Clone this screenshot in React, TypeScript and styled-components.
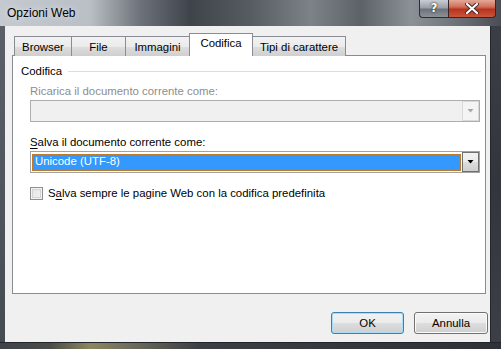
import React from "react";
import styled, { createGlobalStyle } from "styled-components";

const GlobalStyle = createGlobalStyle`
  html, body {
    margin: 0;
    padding: 0;
  }
  body {
    width: 501px;
    height: 349px;
    overflow: hidden;
    font-family: "Liberation Sans", Arial, sans-serif;
    font-size: 11.4px;
    color: #000;
  }
`;

const tabs = [
  { id: "browser", title: "Browser", width: 58 },
  { id: "file", title: "File", width: 55 },
  { id: "img", title: "Immagini", width: 65 },
  { id: "cod", title: "Codifica", width: 64 },
  { id: "font", title: "Tipi di carattere", width: 94 },
];

function Arrow({ color }: { color: string }) {
  return (
    <svg width="7" height="4" viewBox="0 0 7 4">
      <polygon points="0.5,0 6.5,0 3.5,3.5" fill={color} />
    </svg>
  );
}

function App() {
  return (
    <Window>
      <GlobalStyle />
      <TitleBar>
        <Title>Opzioni Web</Title>
        <CaptionButtons>
          <HelpButton>?</HelpButton>
          <CloseButton>
            <svg width="14" height="11" viewBox="0 0 14 11">
              <path
                d="M2 1 L12 10 M12 1 L2 10"
                stroke="#3a2a28"
                strokeWidth="4"
                strokeLinecap="round"
              />
              <path
                d="M2 1 L12 10 M12 1 L2 10"
                stroke="#ffffff"
                strokeWidth="2.2"
                strokeLinecap="round"
              />
            </svg>
          </CloseButton>
        </CaptionButtons>
      </TitleBar>
      <Middle>
        <SideFrame />
        <Client>
          <TabRow>
            {tabs.map((t) => (
              <Tab key={t.id} $width={t.width} $active={t.id === "cod"}>
                {t.title}
              </Tab>
            ))}
          </TabRow>
          <Panel>
            <GroupHeader>
              <span>Codifica</span>
              <GroupLine />
            </GroupHeader>
            <GroupBody>
              <FieldLabel $disabled>Ricarica il documento corrente come:</FieldLabel>
              <Combo $disabled>
                <ComboValue />
                <DropButton $disabled>
                  <Arrow color="#a6a6a6" />
                </DropButton>
              </Combo>
              <FieldLabel $gap={13}>
                <u>S</u>alva il documento corrente come:
              </FieldLabel>
              <Combo>
                <ComboValue $selected>Unicode (UTF-8)</ComboValue>
                <DropButton>
                  <Arrow color="#000" />
                </DropButton>
              </Combo>
              <CheckRow>
                <CheckBox />
                <span>
                  S<u>a</u>lva sempre le pagine Web con la codifica predefinita
                </span>
              </CheckRow>
            </GroupBody>
          </Panel>
          <Footer>
            <Button $default>OK</Button>
            <Button>Annulla</Button>
          </Footer>
        </Client>
        <RightFrame />
      </Middle>
      <BottomFrame />
    </Window>
  );
}

const Window = styled.div`
  width: 501px;
  height: 349px;
  display: flex;
  flex-direction: column;
  background: linear-gradient(
    90deg,
    #51565e 0%,
    #454a52 30%,
    #3d4148 60%,
    #363a40 100%
  );
`;

const TitleBar = styled.div`
  height: 27px;
  display: flex;
  justify-content: space-between;
  align-items: flex-start;
  padding-left: 7px;
  padding-right: 5px;
  background: linear-gradient(
    90deg,
    #c4cad0 0%,
    #b9bfc5 18%,
    #6d727a 28%,
    #3f444b 38%,
    #575c63 50%,
    #7d8288 62%,
    #5d6268 72%,
    #8c9197 82%,
    #6a6f75 92%,
    #4a4e54 100%
  );
`;

const Title = styled.div`
  font-size: 12px;
  padding-top: 6px;
  color: #000;
  text-shadow: 0 0 6px rgba(255, 255, 255, 0.8);
`;

const CaptionButtons = styled.div`
  display: flex;
  height: 18px;
`;

const HelpButton = styled.div`
  width: 29px;
  height: 18px;
  box-sizing: border-box;
  border: 1px solid #2b2e33;
  border-top: none;
  border-right: none;
  border-bottom-left-radius: 4px;
  background: linear-gradient(180deg, #c9ced4 0%, #9aa0a7 45%, #6d737a 55%, #8b9197 100%);
  color: #fff;
  font-family: "DejaVu Sans", sans-serif;
  font-weight: bold;
  font-size: 12px;
  line-height: 17px;
  text-align: center;
  text-shadow: 0 0 2px #222, 0 0 1px #222;
`;

const CloseButton = styled.div`
  width: 48px;
  height: 18px;
  box-sizing: border-box;
  border: 1px solid #3a2420;
  border-top: none;
  border-bottom-right-radius: 4px;
  background: linear-gradient(180deg, #e3a898 0%, #d0705c 40%, #b8331c 55%, #c9563c 100%);
  display: flex;
  align-items: center;
  justify-content: center;
`;

const Middle = styled.div`
  flex: 1;
  display: flex;
`;

const SideFrame = styled.div`
  width: 5px;
  background: linear-gradient(180deg, #5c6169 0%, #4f545c 60%, #464a51 100%);
`;

const RightFrame = styled.div`
  flex: 1;
  background: linear-gradient(180deg, #3b3f45 0%, #32363b 50%, #3c4046 100%);
  border-left: 1px solid #23262a;
`;

const BottomFrame = styled.div`
  height: 6px;
  background: linear-gradient(
    90deg,
    #3f434a 0%,
    #4a4c48 10%,
    #8c8660 18%,
    #6e6c5c 26%,
    #3b3e44 40%,
    #2e3237 100%
  );
  border-top: 1px solid #22252a;
`;

const Client = styled.div`
  width: 485px;
  height: 316px;
  box-sizing: border-box;
  background: #f0f0f0;
  display: flex;
  flex-direction: column;
  padding: 8px 2px 0 7px;
`;

const TabRow = styled.div`
  height: 22px;
  display: flex;
  align-items: flex-end;
  padding-left: 2px;
  margin-bottom: -1px;
  position: relative;
  z-index: 1;
`;

const Tab = styled.div<{ $width: number; $active?: boolean }>`
  width: ${(p) => p.$width}px;
  height: ${(p) => (p.$active ? 23 : 20)}px;
  box-sizing: border-box;
  margin-left: -1px;
  border: 1px solid #898c95;
  border-bottom: none;
  display: flex;
  align-items: ${(p) => (p.$active ? "flex-start" : "center")};
  padding-top: ${(p) => (p.$active ? "3px" : "0")};
  justify-content: center;
  background: ${(p) =>
    p.$active ? "#ffffff" : "linear-gradient(180deg, #f2f2f2 0%, #ebebeb 50%, #dddddd 51%, #cfcfcf 100%)"};
  &:first-child {
    margin-left: 0;
  }
`;

const Panel = styled.div`
  width: 474px;
  height: 239px;
  box-sizing: border-box;
  border: 1px solid #898c95;
  background: #fff;
  padding: 8px 4px 0 8px;
`;

const GroupHeader = styled.div`
  display: flex;
  align-items: center;
  gap: 6px;
  height: 14px;
  color: #000;
`;

const GroupLine = styled.div`
  flex: 1;
  height: 1px;
  background: #d5dfe5;
  margin-top: 1px;
`;

const GroupBody = styled.div`
  display: flex;
  flex-direction: column;
  padding: 6px 0 0 9px;
`;

const FieldLabel = styled.div<{ $disabled?: boolean; $gap?: number }>`
  height: 15px;
  line-height: 15px;
  margin-top: ${(p) => p.$gap ?? 0}px;
  margin-bottom: 1px;
  color: ${(p) => (p.$disabled ? "#8d8d8d" : "#000")};
  u {
    text-underline-offset: 2px;
  }
`;

const Combo = styled.div<{ $disabled?: boolean }>`
  width: 450px;
  height: 22px;
  box-sizing: border-box;
  border: 1px solid ${(p) => (p.$disabled ? "#adadad" : "#a3a3a3")};
  background: ${(p) => (p.$disabled ? "#f0f0f0" : "#fff")};
  display: flex;
  align-items: stretch;
  padding: 0 0 0 1px;
`;

const ComboValue = styled.div<{ $selected?: boolean }>`
  flex: 1;
  margin: 2px 1px 1px 0;
  padding-left: 3px;
  line-height: 15px;
  color: #fff;
  background: ${(p) => (p.$selected ? "#3399ff" : "transparent")};
  outline: ${(p) => (p.$selected ? "1px dotted #c07a2a" : "none")};
  outline-offset: -1px;
`;

const DropButton = styled.div<{ $disabled?: boolean }>`
  width: 17px;
  box-sizing: border-box;
  border: 1px solid ${(p) => (p.$disabled ? "#d9d9d9" : "#707070")};
  background: ${(p) =>
    p.$disabled
      ? "#f4f4f4"
      : "linear-gradient(180deg, #f2f2f2 0%, #ebebeb 50%, #dddddd 51%, #cfcfcf 100%)"};
  display: flex;
  align-items: center;
  justify-content: center;
`;

const CheckRow = styled.div`
  display: flex;
  align-items: center;
  gap: 5px;
  margin-top: 13px;
  height: 14px;
  u {
    text-underline-offset: 2px;
  }
`;

const CheckBox = styled.div`
  width: 13px;
  height: 13px;
  box-sizing: border-box;
  border: 1px solid #8e8f8f;
  background: linear-gradient(135deg, #e3e3e3 0%, #f4f4f4 100%);
  box-shadow: inset 0 0 0 1px #f4f4f4, inset 0 0 0 2px #d3d3d3;
`;

const Footer = styled.div`
  display: flex;
  justify-content: flex-end;
  gap: 10px;
  margin-top: 18px;
`;

const Button = styled.div<{ $default?: boolean }>`
  width: ${(p) => (p.$default ? 73 : 74)}px;
  height: 22px;
  box-sizing: border-box;
  border: 1px solid ${(p) => (p.$default ? "#3c7fb1" : "#707070")};
  border-radius: 3px;
  background: linear-gradient(180deg, #f2f2f2 0%, #ebebeb 50%, #dddddd 51%, #cfcfcf 100%);
  box-shadow: ${(p) => (p.$default ? "inset 0 0 0 1px #a8dcf7" : "inset 0 0 0 1px #fbfbfb")};
  display: flex;
  align-items: center;
  justify-content: center;
`;

export default App;
